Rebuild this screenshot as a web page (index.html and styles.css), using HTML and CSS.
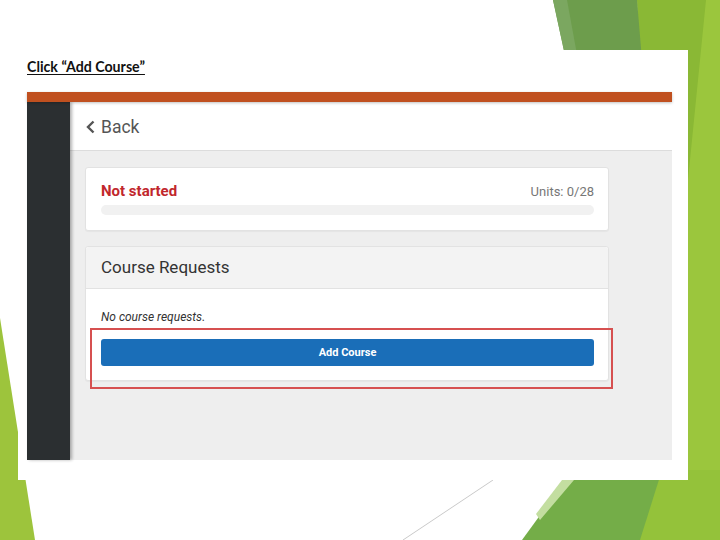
FILE: index.html
```html
<!DOCTYPE html>
<html lang="en">
<head>
  <meta charset="UTF-8">
  <title>Add Course</title>
  <link rel="stylesheet" href="styles.css">
</head>
<body>
  <div class="slide">
    <svg class="deco" width="720" height="540" viewBox="0 0 720 540">
      <rect x="640" y="0" width="80" height="540" fill="#9bc63d"/>
      <polygon points="637,0 706,0 688,180 640,180" fill="#8ab835"/>
      <polygon points="553,0 637,0 642,60 566,60" fill="#6d9d4c"/>
      <polygon points="553,0 567,0 578,60 566,60" fill="#7ba760"/>
      <polygon points="660,470 720,470 720,540 638,540" fill="#94c23a"/>
      <polygon points="573,470 662,470 640,540 522,540" fill="#74ad48"/>
      <polygon points="562,480 574,480 540,520 536,514" fill="#c3dea0"/>
      <line x1="403" y1="540" x2="493" y2="480" stroke="#cacaca" stroke-width="1"/>
      <polygon points="0,318 35,540 0,540" fill="#9dc43c"/>
    </svg>

    <div class="panel">
      <p class="caption">Click “Add Course”</p>

      <div class="app">
        <div class="topbar"></div>
        <div class="app-body">
          <div class="sidebar"></div>
          <div class="main">
            <div class="header">
              <svg class="chevron" width="9" height="14" viewBox="0 0 9 14">
                <polyline points="7.5,1.5 2,7 7.5,12.5" fill="none" stroke="#555" stroke-width="2.4"/>
              </svg>
              <span class="back">Back</span>
            </div>
            <div class="content">
              <div class="card status">
                <div class="status-row">
                  <span class="status-label">Not started</span>
                  <span class="units">Units: 0/28</span>
                </div>
                <div class="progress"></div>
              </div>

              <div class="card requests">
                <div class="card-head">Course Requests</div>
                <div class="card-body">
                  <p class="empty">No course requests.</p>
                  <button class="add-btn">Add Course</button>
                </div>
              </div>
            </div>
          </div>
        </div>
        <div class="highlight"></div>
      </div>
    </div>
  </div>
</body>
</html>
```

FILE: styles.css
```css
html, body { margin: 0; padding: 0; background: #fff; }
.slide { position: relative; width: 720px; height: 540px; overflow: hidden; }
.deco { position: absolute; left: 0; top: 0; }

.panel { position: relative; width: 670px; height: 430px; margin: 50px 0 0 18px; padding: 8px 16px 0 9px; box-sizing: border-box; background: #fff; }
.caption { margin: 0 0 17px; font-family: Lato, "Liberation Sans", sans-serif; font-weight: bold; font-size: 14.2px; line-height: 17px; color: #111; text-decoration: underline; text-underline-offset: 2px; }

.app { position: relative; width: 645px; height: 368px; display: flex; flex-direction: column; font-family: Roboto, "Liberation Sans", sans-serif; }
.topbar { height: 10px; background: #c0501f; box-shadow: 0 1px 3px rgba(0,0,0,0.25); position: relative; z-index: 2; }
.app-body { flex: 1; display: flex; min-height: 0; }
.sidebar { width: 43px; background: #2b2f31; position: relative; z-index: 1; box-shadow: 2px 0 3px rgba(0,0,0,0.3); }
.main { flex: 1; display: flex; flex-direction: column; }

.header { height: 49px; box-sizing: border-box; border-bottom: 1px solid #dcdcdc; background: #fff; display: flex; align-items: center; padding: 2px 0 0 16px; }
.chevron { margin-right: 6px; }
.back { font-size: 17.5px; color: #555; }

.content { flex: 1; background: #eeeeee; padding: 16px 63px 0 15px; }

.card { background: #fff; border: 1px solid #e2e2e2; border-radius: 3px; box-shadow: 0 1px 1px rgba(0,0,0,0.04); }
.status { padding: 14px 14px 15px 15px; margin-bottom: 15px; }
.status-row { display: flex; justify-content: space-between; align-items: baseline; line-height: 18px; }
.status-label { font-size: 15px; font-weight: bold; color: #c1272d; }
.units { font-size: 13px; color: #777; }
.progress { height: 10px; margin-top: 4px; border-radius: 5px; background: #f1f1f1; }

.card-head { padding: 10px 15px 11px; background: #f3f3f3; border-bottom: 1px solid #e2e2e2; font-size: 17px; line-height: 20px; color: #333; border-radius: 3px 3px 0 0; }
.card-body { padding: 21px 14px 14px 15px; }
.empty { margin: 0 0 14px; font-size: 12px; line-height: 15px; font-style: italic; color: #333; }
.add-btn { display: block; width: 100%; height: 27px; border: none; border-radius: 3px; background: #1a6eb8; color: #fff; font-family: Roboto, "Liberation Sans", sans-serif; font-size: 11px; font-weight: bold; cursor: pointer; }

.highlight { position: absolute; left: 63px; top: 236px; width: 523px; height: 61px; box-sizing: border-box; border: 2px solid #d65050; }
```
